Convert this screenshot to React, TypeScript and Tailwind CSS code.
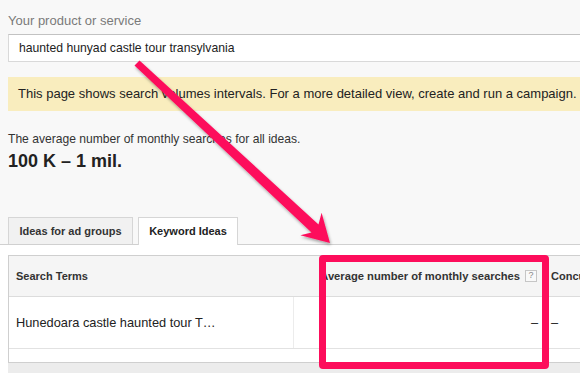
import React from 'react';

const PINK = '#fd0d5b';

const Arrow: React.FC = () => (
  <svg className="absolute left-0 top-0 pointer-events-none" width="580" height="373">
    <defs>
      <filter id="sh" x="-20%" y="-20%" width="140%" height="140%">
        <feDropShadow dx="1" dy="2" stdDeviation="1.5" floodColor="#000" floodOpacity="0.35" />
      </filter>
    </defs>
    <polygon
      filter="url(#sh)"
      fill={PINK}
      points="134.5,65.5 139.5,60.5 318.5,224.5 321.6,212.7 330,243 300.4,235.3 311.5,232.5"
    />
  </svg>
);

const App: React.FC = () => {
  return (
    <div className="relative w-[580px] h-[373px] overflow-hidden bg-[#f8f8f8] font-['Liberation_Sans',Arial,sans-serif]">
      <div className="pl-2 pt-[13px] w-[640px]">
        <div className="h-4 leading-4 text-[13px] text-[#7a7a7a]">Your product or service</div>
        <div className="mt-[5px] h-[28px] bg-white border border-[#d9d9d9] border-t-[#c2c2c2] pl-[10px] flex items-center text-[12.2px] text-[#222]">
          haunted hunyad castle tour transylvania
        </div>
        <div className="mt-[15px] h-[34px] bg-[#f9edbe] pl-[10px] flex items-center text-[13px] text-[#222]">
          This page shows search volumes intervals. For a more detailed view, create and run a campaign.
        </div>
        <div className="mt-[21px] h-[14px] leading-[14px] text-[12.1px] text-[#333]">
          The average number of monthly searches for all ideas.
        </div>
        <div className="mt-[5px] h-5 leading-5 text-[18px] font-bold text-[#222]">100 K – 1 mil.</div>
      </div>

      <div className="mt-[46px] pl-2 flex items-end gap-[5px] border-b border-[#d0d0d0] h-[28px]">
        <div className="w-[125px] h-[27px] bg-[#f1f1f1] border border-b-0 border-[#d6d6d6] flex items-center justify-center text-[11px] font-bold text-[#333]">
          Ideas for ad groups
        </div>
        <div className="w-[100px] h-[28px] -mb-px bg-white border border-b-0 border-[#d6d6d6] flex items-center justify-center text-[11px] font-bold text-[#222]">
          Keyword Ideas
        </div>
      </div>

      <div className="bg-white pt-[10px] pl-2">
        <div className="w-[620px] border border-[#cfcfcf] border-r-0">
          <div className="flex h-[41px] bg-[#f5f5f5] border-b border-[#dcdcdc] text-[11px] font-bold text-[#333]">
            <div className="w-[285px] pl-[7px] flex items-center">Search Terms</div>
            <div className="w-[252px] pr-[9px] flex items-center justify-end gap-[5px]">
              <span className="whitespace-nowrap text-[11.2px]">Average number of monthly searches</span>
              <span className="w-[12px] h-[12px] border border-[#c6c6c6] bg-[#f9f9f9] text-[9px] font-normal text-[#888] flex items-center justify-center">?</span>
            </div>
            <div className="pl-[5px] flex items-center">Concurrence</div>
          </div>
          <div className="flex h-[52px] bg-white border-b border-[#e2e2e2] text-[12.8px] text-[#222]">
            <div className="w-[285px] pl-[7px] flex items-center border-r border-[#ececec]">Hunedoara castle haunted tour T…</div>
            <div className="w-[252px] pr-2 flex items-center justify-end">–</div>
            <div className="pl-[5px] flex items-center">–</div>
          </div>
          <div className="h-[13px] bg-white" />
        </div>
        <div className="h-[20px] bg-[#ececec]" />
      </div>

      <div
        className="absolute left-[319px] top-[255px] w-[230px] h-[114px] border-[7px] rounded-[4px]"
        style={{ borderColor: PINK }}
      />
      <Arrow />
    </div>
  );
};

export default App;
